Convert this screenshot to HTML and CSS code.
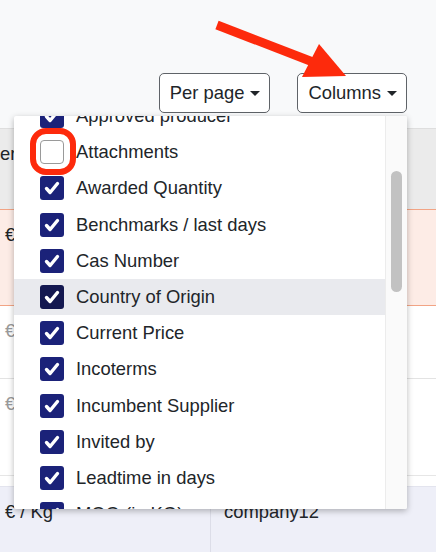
FILE: index.html
```html
<!DOCTYPE html>
<html>
<head>
<meta charset="utf-8">
<link rel="stylesheet" href="styles.css">
</head>
<body>
<div class="page">
  <div class="toolbar">
    <button class="btn">Per page<span class="caret"></span></button>
    <button class="btn">Columns<span class="caret"></span></button>
  </div>
  <div class="grid">
    <div class="row row-head">
      <div class="cell c1"><span class="clip">Supplier</span></div>
      <div class="cell c2"></div>
    </div>
    <div class="row row-pink">
      <div class="cell c1">€</div>
      <div class="cell c2"></div>
    </div>
    <div class="row row-a">
      <div class="cell c1 muted">€</div>
      <div class="cell c2"></div>
    </div>
    <div class="row row-b">
      <div class="cell c1 muted">€</div>
      <div class="cell c2"></div>
    </div>
    <div class="row row-gap"></div>
    <div class="row row-lav">
      <div class="cell c1">€ / Kg</div>
      <div class="cell c2">company12</div>
    </div>
  </div>

  <div class="menu">
    <div class="list">
      <div class="item"><span class="box on"><svg viewBox="0 0 24 24"><path d="M6.5 12.5l3.6 4 7.4-9"/></svg></span>Approved producer</div>
      <div class="item"><span class="box off"></span>Attachments</div>
      <div class="item"><span class="box on"><svg viewBox="0 0 24 24"><path d="M6.5 12.5l3.6 4 7.4-9"/></svg></span>Awarded Quantity</div>
      <div class="item"><span class="box on"><svg viewBox="0 0 24 24"><path d="M6.5 12.5l3.6 4 7.4-9"/></svg></span>Benchmarks / last days</div>
      <div class="item"><span class="box on"><svg viewBox="0 0 24 24"><path d="M6.5 12.5l3.6 4 7.4-9"/></svg></span>Cas Number</div>
      <div class="item hover"><span class="box on"><svg viewBox="0 0 24 24"><path d="M6.5 12.5l3.6 4 7.4-9"/></svg></span>Country of Origin</div>
      <div class="item"><span class="box on"><svg viewBox="0 0 24 24"><path d="M6.5 12.5l3.6 4 7.4-9"/></svg></span>Current Price</div>
      <div class="item"><span class="box on"><svg viewBox="0 0 24 24"><path d="M6.5 12.5l3.6 4 7.4-9"/></svg></span>Incoterms</div>
      <div class="item"><span class="box on"><svg viewBox="0 0 24 24"><path d="M6.5 12.5l3.6 4 7.4-9"/></svg></span>Incumbent Supplier</div>
      <div class="item"><span class="box on"><svg viewBox="0 0 24 24"><path d="M6.5 12.5l3.6 4 7.4-9"/></svg></span>Invited by</div>
      <div class="item"><span class="box on"><svg viewBox="0 0 24 24"><path d="M6.5 12.5l3.6 4 7.4-9"/></svg></span>Leadtime in days</div>
      <div class="item"><span class="box on"><svg viewBox="0 0 24 24"><path d="M6.5 12.5l3.6 4 7.4-9"/></svg></span>MOQ (in KG)</div>
    </div>
    <div class="scrollbar"><div class="thumb"></div></div>
  </div>

  <div class="ring"></div>

  <svg class="arrow" viewBox="0 0 436 552" width="436" height="552">
    <line x1="217" y1="25" x2="318" y2="64" stroke="#fd2a0c" stroke-width="9"/>
    <polygon points="319,44 346,76 302,77" fill="#fd2a0c"/>
  </svg>
</div>
</body>
</html>
```

FILE: styles.css
```css
* { box-sizing: border-box; }
html, body {
  margin: 0;
  padding: 0;
  background: #f8f9fa;
  font-family: "Liberation Sans", Arial, sans-serif;
  color: #212529;
}
.page {
  position: relative;
  width: 436px;
  height: 552px;
  overflow: hidden;
}
.toolbar {
  height: 128px;
  display: flex;
  justify-content: flex-end;
  align-items: flex-start;
  gap: 27px;
  padding: 73px 29px 0 0;
}
.btn {
  height: 40px;
  display: flex;
  align-items: center;
  padding: 0 9px 0 10px;
  background: #fff;
  border: 1px solid #5f6368;
  border-radius: 5px;
  font-family: "Liberation Sans", Arial, sans-serif;
  font-size: 18.4px;
  color: #212529;
}
.caret {
  display: inline-block;
  margin-left: 6px;
  width: 0;
  height: 0;
  border-top: 5.5px solid #212529;
  border-left: 5px solid transparent;
  border-right: 5px solid transparent;
}
.grid {
  display: flex;
  flex-direction: column;
}
.row {
  display: grid;
  grid-template-columns: 211px 1fr;
  font-size: 18.4px;
  line-height: 24px;
}
.cell {
  padding: 13px 0 0 5px;
  white-space: nowrap;
  overflow: hidden;
}
.c2 { padding-left: 13px; }
.clip { display: inline-block; margin-left: -56px; }
.row-head {
  height: 82px;
  background: #ebebeb;
  border-top: 1px solid #dedede;
  border-bottom: 1px solid #f2a485;
}
.row-pink {
  height: 96px;
  background: #fdece6;
  border-bottom: 1px solid #f2a485;
}
.row-a {
  height: 73px;
  background: #fff;
  border-bottom: 1px solid #e3e3e3;
}
.row-b {
  height: 97px;
  background: #fff;
  border-bottom: 1px solid #e6e6e6;
}
.row-gap {
  height: 10px;
  background: #fff;
}
.row-lav {
  height: 80px;
  background: #eeeff8;
  border-top: 1px solid #e3e4ee;
}
.row-lav .c1 { border-right: 1px solid #dcdde8; }
.muted { color: #9a9a9a; }

.menu {
  position: absolute;
  left: 14px;
  top: 116px;
  width: 393px;
  height: 393px;
  background: #fff;
  display: flex;
  box-shadow: 0 2px 6px rgba(0,0,0,0.28);
  border-radius: 2px;
  overflow: hidden;
}
.list {
  flex: 1;
  overflow: hidden;
}
.item {
  height: 36.2px;
  display: flex;
  align-items: center;
  gap: 12px;
  padding-left: 26px;
  font-size: 18.4px;
  color: #212529;
  white-space: nowrap;
}
.item:first-child { margin-top: -18px; }
.item.hover { background: #e9eaee; }
.box {
  width: 24px;
  height: 24px;
  flex: none;
  border-radius: 3px;
  display: flex;
}
.box.on { background: #1b2279; }
.item.hover .box.on { background: #141850; }
.box.off {
  background: #fff;
  border: 1.5px solid #9a9a9a;
  border-radius: 4px;
}
.box svg { width: 24px; height: 24px; }
.box path {
  fill: none;
  stroke: #fff;
  stroke-width: 3.4;
  stroke-linecap: round;
  stroke-linejoin: round;
}
.scrollbar {
  width: 22px;
  flex: none;
  background: #fafafa;
  border-left: 1px solid #ececec;
  padding: 55px 0 0 5px;
}
.thumb {
  width: 11px;
  height: 121px;
  background: #c2c2c2;
  border-radius: 6px;
}
.ring {
  position: absolute;
  left: 30px;
  top: 128px;
  width: 46px;
  height: 47px;
  border: 6.5px solid #fd2a0c;
  border-radius: 16px;
}
.arrow {
  position: absolute;
  left: 0;
  top: 0;
  pointer-events: none;
}
```
